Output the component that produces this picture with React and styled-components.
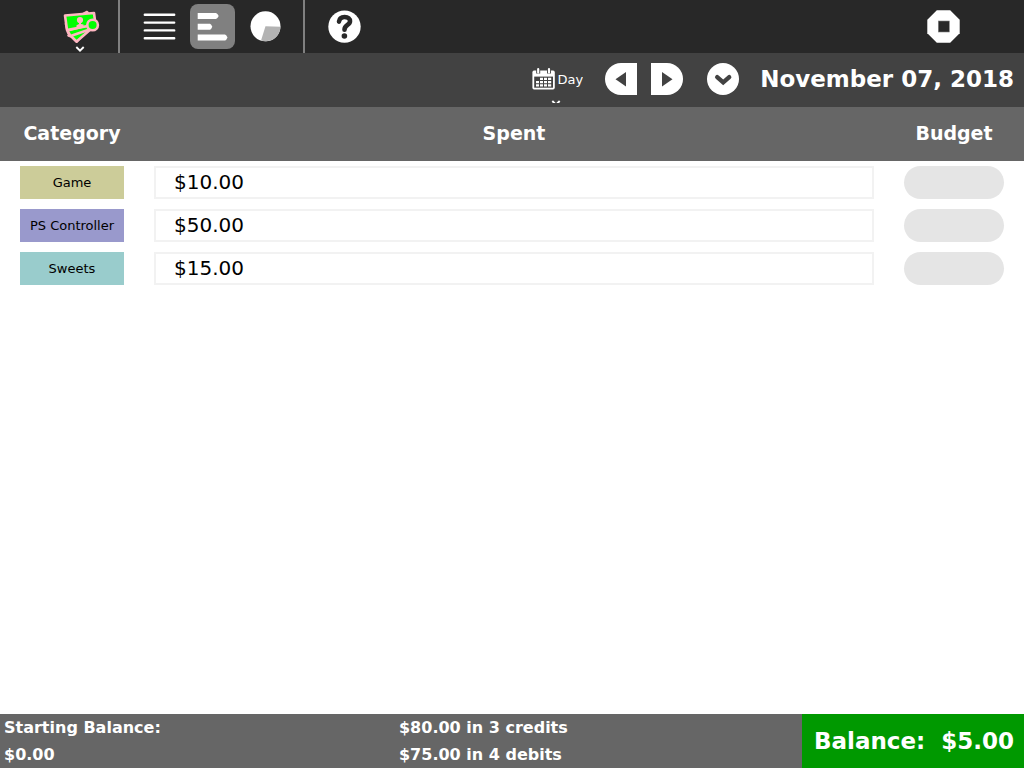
import React from "react";
import styled, { createGlobalStyle } from "styled-components";

const GlobalStyle = createGlobalStyle`
  * { box-sizing: border-box; }
  body {
    margin: 0;
    background: #fff;
    color: #000;
    font-family: "DejaVu Sans", Verdana, sans-serif;
  }
`;

const Page = styled.div`
  display: flex;
  flex-direction: column;
  min-height: 100vh;
`;

const MainBar = styled.header`
  display: flex;
  align-items: center;
  height: 53px;
  padding: 0 58px;
  background: #282828;
`;

const Separator = styled.div`
  align-self: stretch;
  width: 2px;
  margin: 0 17px 0 15px;
  background: #808080;
`;

const ToolGroup = styled.div`
  display: flex;
  gap: 8px;
`;

const ToolButton = styled.button`
  position: relative;
  display: flex;
  align-items: center;
  justify-content: center;
  width: 45px;
  height: 45px;
  padding: 0;
  border: 0;
  border-radius: 8px;
  background: ${(p) => (p.$active ? "#808080" : "transparent")};
  color: #fff;
  margin-left: ${(p) => (p.$end ? "auto" : "0")};
`;

const Caret = styled.svg`
  position: absolute;
  left: 50%;
  bottom: ${(p) => p.$bottom}px;
  margin-left: -6px;
`;

const PeriodBar = styled.div`
  display: flex;
  align-items: center;
  justify-content: flex-end;
  height: 54px;
  padding: 0 10px 2px;
  background: #424242;
  color: #fff;
`;

const PeriodButton = styled.button`
  position: relative;
  display: flex;
  align-items: center;
  gap: 3px;
  height: 48px;
  margin-right: 22px;
  padding: 0;
  border: 0;
  background: transparent;
  color: #fff;
  font-family: inherit;
  font-size: 13px;
  overflow: hidden;
`;

const Stepper = styled.div`
  display: flex;
  gap: 14px;
  margin-right: 24px;
`;

const RoundButton = styled.button`
  display: flex;
  width: 32px;
  height: 32px;
  padding: 0;
  border: 0;
  background: transparent;
`;

const DateTitle = styled.h1`
  margin: 0 0 0 21px;
  font-size: 23px;
  line-height: 27px;
  white-space: nowrap;
`;

const Main = styled.main`
  flex: 1;
`;

const BudgetTable = styled.table`
  width: 100%;
  table-layout: fixed;
  border-collapse: collapse;
`;

const HeadCell = styled.th`
  width: ${(p) => p.$width || "auto"};
  height: 54px;
  padding: 0 0 2px;
  background: #666;
  color: #fff;
  font-size: 19px;
  line-height: 22px;
  text-align: center;
`;

const Cell = styled.td`
  padding: 5px ${(p) => p.$side}px;
`;

const Category = styled.div`
  height: 33px;
  background: ${(p) => p.$color};
  font-size: 13px;
  line-height: 33px;
  text-align: center;
  white-space: nowrap;
`;

const Spent = styled.div`
  height: 33px;
  padding-left: 18px;
  border: 2px solid #f2f2f2;
  font-size: 20px;
  line-height: 29px;
`;

const BudgetInput = styled.input`
  display: block;
  width: 100%;
  height: 33px;
  padding: 0 16px;
  border: 0;
  border-radius: 17px;
  background: #e5e5e5;
  font-family: inherit;
  font-size: 16px;
`;

const Footer = styled.footer`
  display: grid;
  grid-template-columns: 395fr 407fr auto;
  background: #666;
  color: #fff;
  font-size: 16px;
  font-weight: bold;
  line-height: 27px;
`;

const Summary = styled.div`
  padding-left: 4px;
`;

const Balance = styled.div`
  padding: 0 10px 0 12px;
  background: #009900;
  font-size: 23px;
  line-height: 54px;
  white-space: pre;
`;

const rows = [
  { name: "Game", color: "#cccc99", spent: "$10.00" },
  { name: "PS Controller", color: "#9999cc", spent: "$50.00" },
  { name: "Sweets", color: "#99cccc", spent: "$15.00" },
];

function CaretMark({ bottom }) {
  return (
    <Caret $bottom={bottom} width="10" height="6" viewBox="0 0 10 6" aria-hidden="true">
      <path d="M1.3 1 L5 4.6 L8.7 1" fill="none" stroke="#fff" strokeWidth="1.9" />
    </Caret>
  );
}

function MoneyIcon() {
  return (
    <svg width="45" height="45" viewBox="0 0 45 45" aria-hidden="true">
      <g fill="#00ff00" stroke="#ffb6c1" strokeWidth="2.6" strokeLinejoin="round">
        <path d="M29 8L36 19L29 26L18.6 37.6L10 28.5L8 20Z" />
        <path d="M10.5 31.5L31 22L33.5 24.5L18.6 37.6L13.5 32.5Z" />
        <path d="M9.5 26.5L35 20L33 25L12.5 32Z" />
        <path d="M7 11.5L36 9L37.5 20.5L9 26Z" />
        <circle cx="34.6" cy="21" r="5.3" />
      </g>
      <g fill="#ffb6c1">
        <circle cx="22" cy="16" r="3.1" />
        <path d="M21 17H23V20L25.5 20.5V22.5L18.5 23.5V21.3L21 20Z" />
      </g>
    </svg>
  );
}

function ListIcon() {
  return (
    <svg width="45" height="45" viewBox="0 0 45 45" aria-hidden="true">
      <path d="M7.8 10.8H37.2M7.8 18.6H37.2M7.8 26.4H37.2M7.8 34.2H37.2" stroke="#fff" strokeWidth="2.4" strokeLinecap="round" />
    </svg>
  );
}

function BarsIcon() {
  return (
    <svg width="45" height="45" viewBox="0 0 45 45" aria-hidden="true">
      <path d="M7.7 9H26Q27.5 9.5 28.7 12Q27.5 14.5 26 15H7.7ZM7.7 19.7H20Q21.3 20.2 22.3 22.7Q21.3 25.2 20 25.7H7.7ZM7.7 30.5H35Q36.5 31 37.5 33.5Q36.5 36 35 36.5H7.7Z" fill="#fff" />
    </svg>
  );
}

function PieIcon() {
  return (
    <svg width="45" height="45" viewBox="0 0 45 45" aria-hidden="true">
      <circle cx="22.5" cy="22.3" r="15" fill="#fff" />
      <path d="M22.5 22.3L37.5 22.8A15 15 0 0 1 18 36.6Z" fill="#b3b3b3" />
    </svg>
  );
}

function HelpIcon() {
  return (
    <svg width="45" height="45" viewBox="0 0 45 45" aria-hidden="true">
      <circle cx="22.5" cy="22.6" r="16.2" fill="#fff" />
      <path d="M17 17.6C17.4 14.2 19.6 13 22.6 13C26.2 13 28 14.8 28 17.2C28 21.3 22.5 20.6 22.5 25.8" fill="none" stroke="#282828" strokeWidth="4.6" strokeLinecap="round" />
      <circle cx="22.4" cy="32" r="2.8" fill="#282828" />
    </svg>
  );
}

function StopIcon() {
  return (
    <svg width="45" height="45" viewBox="0 0 45 45" aria-hidden="true">
      <path d="M15.8 6.2H29.2L38.7 15.7V29.2L29.2 38.7H15.8L6.3 29.2V15.7Z" fill="#fff" />
      <rect x="17.3" y="17" width="11" height="11" fill="#282828" stroke="#808080" strokeWidth="0.6" />
    </svg>
  );
}

function CalendarIcon() {
  return (
    <svg width="23" height="22" viewBox="0 0 23 22" aria-hidden="true">
      <path d="M2 2.5H21Q22.8 2.5 22.8 4.5V19.6Q22.8 21.6 21 21.6H2Q.4 21.6 .4 19.6V4.5Q.4 2.5 2 2.5Z" fill="#fff" />
      <path d="M2.2 8.6H21V19.7H2.2Z" fill="#424242" />
      <path d="M4.2 0h4v5.6h-4ZM15 0h4v5.6h-4Z" fill="#424242" />
      <path d="M6.2 1.2V4.4M17 1.2V4.4" stroke="#fff" strokeWidth="2.2" strokeLinecap="round" />
      <path d="M8 9.8h3v2.3h-3zM12 9.8h3v2.3h-3zM16 9.8h3.2v2.3h-3.2zM4 13h3v2.3h-3zM8 13h3v2.3h-3zM12 13h3v2.3h-3zM16 13h3.2v2.3h-3.2zM4 16.3h3v2.2h-3zM8 16.3h3v2.2h-3zM12 16.3h3v2.2h-3zM16 16.3h3.2v2.2h-3.2z" fill="#fff" />
    </svg>
  );
}

function StepIcon({ next }) {
  return (
    <svg width="32" height="32" viewBox="0 0 32 32" aria-hidden="true">
      {next ? (
        <>
          <path d="M0 0H16A16 16 0 0 1 16 32H0Z" fill="#fff" />
          <path d="M11 9V23.5L21.5 16.2Z" fill="#424242" />
        </>
      ) : (
        <>
          <path d="M32 0H16A16 16 0 0 0 16 32H32Z" fill="#fff" />
          <path d="M21 9V23.5L10.5 16.2Z" fill="#424242" />
        </>
      )}
    </svg>
  );
}

function DownIcon() {
  return (
    <svg width="32" height="32" viewBox="0 0 32 32" aria-hidden="true">
      <circle cx="16" cy="16" r="16" fill="#fff" />
      <path d="M10.2 14.2L16.2 19.4L22.2 14.2" fill="none" stroke="#424242" strokeWidth="4.4" strokeLinecap="round" />
    </svg>
  );
}

export default function App() {
  return (
    <Page>
      <GlobalStyle />
      <MainBar>
        <ToolButton aria-label="Activity">
          <MoneyIcon />
          <CaretMark bottom={-3} />
        </ToolButton>
        <Separator />
        <ToolGroup>
          <ToolButton aria-label="Register"><ListIcon /></ToolButton>
          <ToolButton aria-label="Budget" $active><BarsIcon /></ToolButton>
          <ToolButton aria-label="Chart"><PieIcon /></ToolButton>
        </ToolGroup>
        <Separator />
        <ToolButton aria-label="Help"><HelpIcon /></ToolButton>
        <ToolButton aria-label="Stop" $end><StopIcon /></ToolButton>
      </MainBar>
      <PeriodBar>
        <PeriodButton>
          <CalendarIcon />
          <span>Day</span>
          <CaretMark bottom={-3} />
        </PeriodButton>
        <Stepper>
          <RoundButton aria-label="Previous"><StepIcon /></RoundButton>
          <RoundButton aria-label="Next"><StepIcon next /></RoundButton>
        </Stepper>
        <RoundButton aria-label="Jump to date"><DownIcon /></RoundButton>
        <DateTitle>November 07, 2018</DateTitle>
      </PeriodBar>
      <Main>
        <BudgetTable>
          <thead>
            <tr>
              <HeadCell $width="144px">Category</HeadCell>
              <HeadCell>Spent</HeadCell>
              <HeadCell $width="140px">Budget</HeadCell>
            </tr>
          </thead>
          <tbody>
            {rows.map((row) => (
              <tr key={row.name}>
                <Cell $side={20}><Category $color={row.color}>{row.name}</Category></Cell>
                <Cell $side={10}><Spent>{row.spent}</Spent></Cell>
                <Cell $side={20}><BudgetInput type="text" aria-label={`${row.name} budget`} /></Cell>
              </tr>
            ))}
          </tbody>
        </BudgetTable>
      </Main>
      <Footer>
        <Summary>
          <div>Starting Balance:</div>
          <div>$0.00</div>
        </Summary>
        <Summary>
          <div>$80.00 in 3 credits</div>
          <div>$75.00 in 4 debits</div>
        </Summary>
        <Balance>{"Balance:  $5.00"}</Balance>
      </Footer>
    </Page>
  );
}
